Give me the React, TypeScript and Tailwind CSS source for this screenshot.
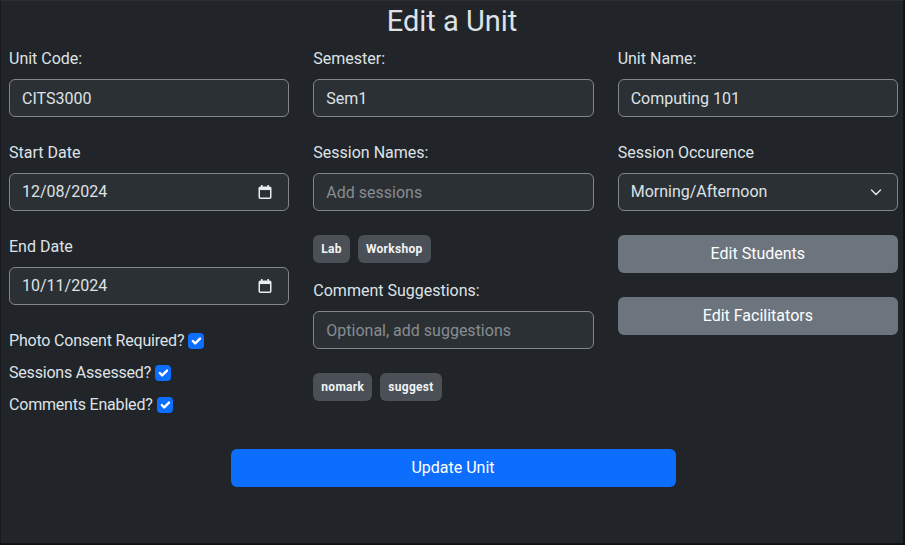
import React from 'react';

const font = { fontFamily: 'Roboto, "Noto Sans", sans-serif' };

function Label({ children }: { children: React.ReactNode }) {
  return <label className="block h-6 leading-6 text-base text-[#dee2e6] mb-2">{children}</label>;
}

function TextField({ label, value, placeholder }: { label: string; value?: string; placeholder?: string }) {
  return (
    <div>
      <Label>{label}</Label>
      <input
        readOnly
        defaultValue={value}
        placeholder={placeholder}
        className="block w-full h-[38px] px-3 rounded-md border border-[#80868c] bg-[#2b3035] text-base text-[#dee2e6] placeholder:text-[#878c91] outline-none"
        style={font}
      />
    </div>
  );
}

function CalendarIcon() {
  return (
    <svg width="14" height="14" viewBox="0 0 14 14" fill="none">
      <rect x="3" y="0" width="1.6" height="2.5" fill="#e9ecef" />
      <rect x="9.4" y="0" width="1.6" height="2.5" fill="#e9ecef" />
      <rect x="1.25" y="2.25" width="11.5" height="11" rx="1" stroke="#e9ecef" strokeWidth="1.5" />
      <rect x="1.25" y="2.25" width="11.5" height="2.8" fill="#e9ecef" />
    </svg>
  );
}

function DateField({ label, value }: { label: string; value: string }) {
  return (
    <div>
      <Label>{label}</Label>
      <div className="flex items-center justify-between h-[38px] pl-3 pr-4 rounded-md border border-[#80868c] bg-[#2b3035] text-base text-[#dee2e6]">
        <span>{value}</span>
        <CalendarIcon />
      </div>
    </div>
  );
}

function Check({ label }: { label: string }) {
  return (
    <div className="flex items-center h-6 text-base text-[#dee2e6]">
      <span className="tracking-[-0.2px]">{label}</span>
      <span className="ml-1 w-4 h-4 rounded bg-[#0d6efd] flex items-center justify-center">
        <svg width="16" height="16" viewBox="0 0 20 20" fill="none">
          <path d="m6 10 3 3 6-6" stroke="#fff" strokeWidth="3" strokeLinecap="round" strokeLinejoin="round" />
        </svg>
      </span>
    </div>
  );
}

function Badges({ items }: { items: string[] }) {
  return (
    <div className="flex gap-2">
      {items.map((item) => (
        <span
          key={item}
          className="h-7 px-2 flex items-center rounded-md bg-[#4a5056] text-xs font-bold tracking-[0.3px] text-[#f1f3f5]"
        >
          {item}
        </span>
      ))}
    </div>
  );
}

export default function App() {
  return (
    <div
      className="w-full h-[545px] bg-[#212529] border-t border-t-[#2a2e33] border-l border-l-[#17191c] border-r-2 border-r-[#111315] border-b-2 border-b-[#111315] overflow-hidden"
      style={font}
    >
      <h2 className="mt-[3px] mb-2 text-center text-[29px] leading-[35px] font-normal text-[#dee2e6]">Edit a Unit</h2>

      <div className="grid grid-cols-3 gap-x-6 pl-[8px] pr-[5px]">
        <div className="flex flex-col gap-6">
          <TextField label="Unit Code:" value="CITS3000" />
          <DateField label="Start Date" value="12/08/2024" />
          <DateField label="End Date" value="10/11/2024" />
          <div className="flex flex-col gap-2">
            <Check label="Photo Consent Required?" />
            <Check label="Sessions Assessed?" />
            <Check label="Comments Enabled?" />
          </div>
        </div>

        <div className="flex flex-col gap-6">
          <TextField label="Semester:" value="Sem1" />
          <TextField label="Session Names:" placeholder="Add sessions" />
          <div className="flex flex-col gap-4">
            <Badges items={['Lab', 'Workshop']} />
            <TextField label="Comment Suggestions:" placeholder="Optional, add suggestions" />
          </div>
          <Badges items={['nomark', 'suggest']} />
        </div>

        <div className="flex flex-col gap-6">
          <TextField label="Unit Name:" value="Computing 101" />
          <div>
            <Label>Session Occurence</Label>
            <div className="flex items-center justify-between h-[38px] pl-3 pr-[15px] rounded-md border border-[#80868c] bg-[#2b3035] text-base text-[#dee2e6]">
              <span>Morning/Afternoon</span>
              <svg width="12" height="8" viewBox="0 0 12 8" fill="none">
                <path d="m1.5 2 4.5 4.5 4.5-4.5" stroke="#dee2e6" strokeWidth="1.5" strokeLinecap="round" strokeLinejoin="round" />
              </svg>
            </div>
          </div>
          <button className="h-[38px] w-full rounded-md bg-[#6c757d] text-base text-white">Edit Students</button>
          <button className="h-[38px] w-full rounded-md bg-[#6c757d] text-base text-white">Edit Facilitators</button>
        </div>
      </div>

      <div className="mt-8 flex justify-center pl-[2px]">
        <button className="h-[38px] w-[445px] rounded-md bg-[#0d6efd] text-base text-white">Update Unit</button>
      </div>
    </div>
  );
}
